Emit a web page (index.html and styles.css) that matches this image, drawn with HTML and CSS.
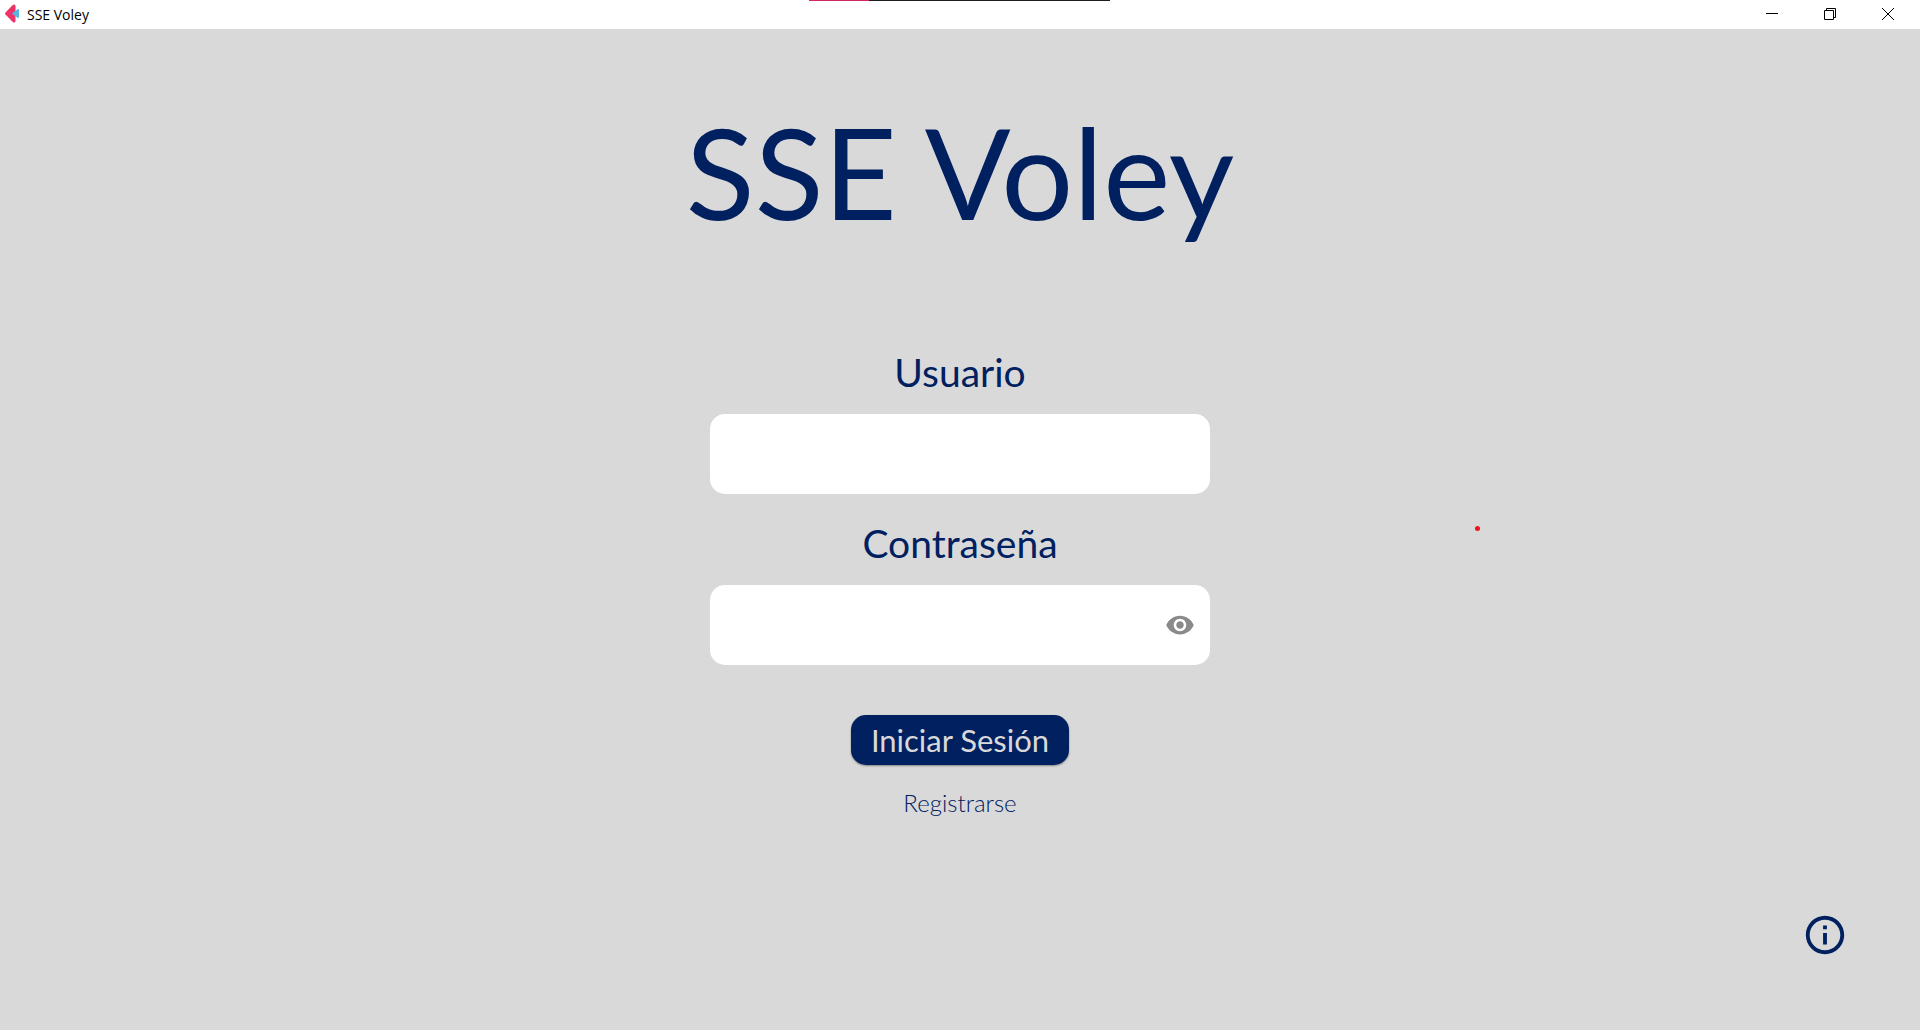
FILE: index.html
```html
<!DOCTYPE html>
<html lang="es">
<head>
  <meta charset="utf-8">
  <meta name="viewport" content="width=device-width, initial-scale=1">
  <title>SSE Voley</title>
  <link rel="stylesheet" href="styles.css">
</head>
<body>
  <header class="titlebar">
    <svg class="app-icon" viewBox="0 0 16 20" aria-hidden="true">
      <path fill="#ee3167" d="M0.500 8.500 L7.500 1.300 Q10.500 -1 10.500 2.500 V16.500 Q10.500 20 7.500 17.700 L0.500 10.500 Q-0.400 9.500 0.500 8.500 Z"/>
      <path fill="#57b5df" d="M6.800 9.500 L12.500 5.200 Q14 4.500 14 6 V13 Q14 14.500 12.500 13.800 Z"/>
    </svg>
    <span class="window-title">SSE Voley</span>
    <div class="window-controls">
      <button class="window-button" type="button" aria-label="Minimizar">
        <svg viewBox="0 0 12 12"><path d="M0 5.500H12"/></svg>
      </button>
      <button class="window-button" type="button" aria-label="Restaurar">
        <svg viewBox="0 0 12 12"><path d="M.5 2.500H9.500V11.500H.5ZM2.500 2.500V.5H11.500V9.500H9.500"/></svg>
      </button>
      <button class="window-button" type="button" aria-label="Cerrar">
        <svg viewBox="0 0 12 12"><path d="M0 0L12 12M12 0L0 12"/></svg>
      </button>
    </div>
    <div class="progress"></div>
  </header>

  <main class="screen">
    <h1 class="brand">SSE Voley</h1>
    <form class="login">
      <label class="label" for="user">Usuario</label>
      <input class="field" id="user" type="text">
      <label class="label" for="password">Contraseña</label>
      <div class="password">
        <input class="field" id="password" type="password">
        <button class="reveal" type="button" aria-label="Mostrar contraseña">
          <svg viewBox="0 0 24 24"><path d="M12 4.500C7 4.500 2.730 7.610 1 12c1.730 4.390 6 7.500 11 7.500s9.270-3.110 11-7.500c-1.730-4.390-6-7.500-11-7.500zM12 17c-2.760 0-5-2.240-5-5s2.240-5 5-5 5 2.240 5 5-2.240 5-5 5zm0-8c-1.660 0-3 1.340-3 3s1.340 3 3 3 3-1.340 3-3-1.340-3-3-3z"/></svg>
        </button>
      </div>
      <button class="submit" type="submit">Iniciar Sesión</button>
      <a class="register" href="#registro">Registrarse</a>
    </form>
    <button class="info" type="button" aria-label="Información">
      <svg viewBox="0 0 24 24"><path d="M11 7h2v2h-2zm0 4h2v6h-2zm1-9C6.480 2 2 6.480 2 12s4.480 10 10 10 10-4.480 10-10S17.520 2 12 2zm0 18c-4.410 0-8-3.590-8-8s3.590-8 8-8 8 3.590 8 8-3.590 8-8 8z"/></svg>
    </button>
    <span class="pointer-dot"></span>
  </main>
</body>
</html>
```
FILE: styles.css
```css
* {
  box-sizing: border-box;
}

body {
  display: flex;
  flex-direction: column;
  min-height: 100vh;
  margin: 0;
  background: #d9d9d9;
  color: #002060;
  font-family: Lato, "Open Sans", sans-serif;
}

button {
  padding: 0;
  border: 0;
  background: none;
  color: inherit;
  font: inherit;
  cursor: pointer;
}

svg {
  display: block;
}

.titlebar {
  position: relative;
  display: flex;
  align-items: center;
  height: 29px;
  padding: 0 3px 1px 5px;
  background: #fff;
  color: #000;
}

.app-icon {
  width: 16px;
  height: 20px;
}

.window-title {
  margin-left: 6px;
  font-family: "Open Sans", sans-serif;
  font-size: 14px;
}

.window-controls {
  display: flex;
  height: 100%;
  margin-left: auto;
}

.window-button {
  display: grid;
  place-items: center;
  width: 58px;
}

.window-button svg {
  width: 12px;
  height: 12px;
  fill: none;
  stroke: #000;
}

.progress {
  position: absolute;
  top: 0;
  left: 50%;
  width: 301px;
  height: 1px;
  margin-left: -151px;
  background: linear-gradient(to right, #d22660 20%, #1e1e1e 20%);
}

.screen {
  position: relative;
  display: flex;
  flex: 1;
  flex-direction: column;
  align-items: center;
  padding: 60px 72px;
}

.brand {
  margin: 0;
  font-size: 127px;
  font-weight: 400;
  line-height: 164px;
}

.login {
  display: flex;
  flex-direction: column;
  align-items: center;
  width: 100%;
  max-width: 500px;
  margin-top: 93px;
}

.label {
  font-size: 39px;
  font-weight: 400;
  line-height: 52px;
}

.field {
  display: block;
  width: 100%;
  height: 80px;
  margin: 16px 0 23px;
  padding: 0 20px;
  border: 0;
  border-radius: 15px;
  outline: 0;
  background: #fff;
  color: inherit;
  font: inherit;
  font-size: 30px;
}

.password {
  position: relative;
  width: 100%;
}

.password .field {
  padding-right: 60px;
}

.reveal {
  position: absolute;
  top: 41px;
  right: 15px;
}

.reveal svg {
  width: 30px;
  height: 30px;
  fill: #8a8a8a;
}

.submit {
  height: 50px;
  margin-top: 27px;
  padding: 0 20px;
  border-radius: 15px;
  background: #002060;
  box-shadow: 0 1px 2px rgba(0, 0, 0, 0.4);
  color: #d9d9d9;
  font-size: 31px;
}

.register {
  margin-top: 23px;
  color: inherit;
  font-size: 24px;
  font-weight: 300;
  line-height: 30px;
  text-decoration: none;
}

.info {
  align-self: flex-end;
  margin-top: 94px;
}

.info svg {
  width: 46px;
  height: 46px;
  fill: #002060;
}

.pointer-dot {
  position: absolute;
  top: 497px;
  left: 77%;
  width: 5px;
  height: 5px;
  margin-left: -3px;
  border-radius: 50%;
  background: #f01420;
}
```
